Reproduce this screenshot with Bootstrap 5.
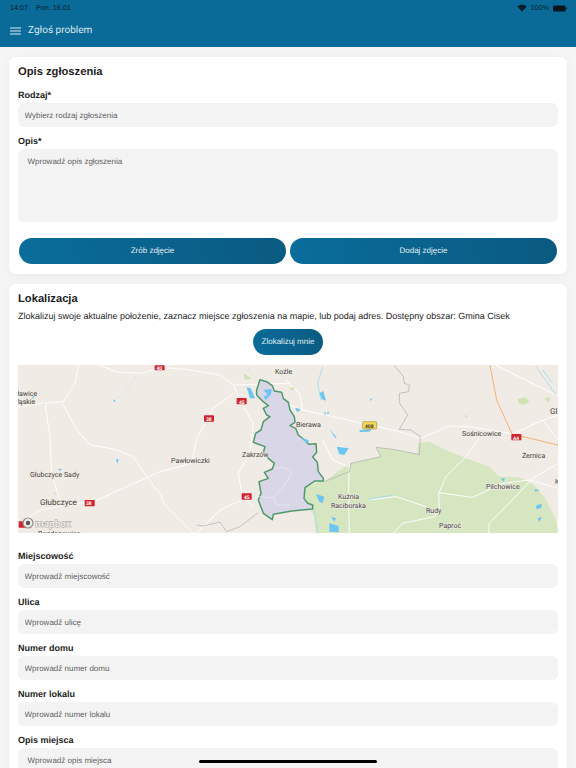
<!DOCTYPE html>
<html lang="pl">

<head>
    <meta charset="UTF-8">
    <meta name="viewport" content="width=device-width, initial-scale=1.0">
    <title>Zgłoś problem</title>
    <link href="https://cdn.jsdelivr.net/npm/bootstrap@5.3.2/dist/css/bootstrap.min.css" rel="stylesheet">
    <style>
        html, body { height: 768px; overflow: hidden; }
        body { background: #f5f5f5; font-family: "Liberation Sans", Arial, sans-serif; color: #1d1d1d; text-rendering: geometricPrecision; }
        .app-top { background: #0a6b98; height: 47px; margin-bottom: 10px; color: #dbe8ef; }
        .status-row { height: 14px; padding: 2px 9px 0 10px; font-size: 7.2px; line-height: 10px; color: #06202e; }
        .navbar.title-row { height: 33px; padding: 0 0 0 10px; gap: 7px; }
        .title-row span { font-family: Roboto, sans-serif; font-size: 10px; color: #dce9f0; }
        .sheet { background: #fff; border: 0; border-radius: 7px; margin: 0 9px 10px; padding: 8px 9px 0; box-shadow: 0 2px 10px rgba(0,0,0,.05); }
        .sheet-title { font-size: 11.2px; font-weight: 700; line-height: 14px; margin: 0; }
        .opis-title { margin-bottom: 10px; }
        .field-label { font-size: 9px; font-weight: 700; line-height: 12px; margin: 0 0 2px; display: block; }
        .field-input { background: #f3f3f3; border: 0; border-radius: 6px; height: 24px; padding: 0 6.5px; font-size: 8px; color: #444; text-rendering: geometricPrecision; }
        .field-input::placeholder { color: #5e5e5e; opacity: 1; }
        .field-area { height: 73px; padding: 7px 9.5px; resize: none; }
        .field-input:focus { background: #f3f3f3; box-shadow: none; }
        .addr { margin-bottom: 8px; }
        .pill-btn { background: linear-gradient(70deg, #0a6d9c, #0a5a80); color: #e4eef3; border: 0; border-radius: 13px; height: 26px; padding: 0; font-size: 8px; text-rendering: geometricPrecision; }
        .opis-card { padding-bottom: 10px; }
        .photo-row { gap: 4px; margin: 16px 1px 0; }
        .photo-row .btn { flex: 1 1 0; }
        .loc-text { font-size: 9px; line-height: 12px; margin: 4px 0 7px; }
        .loc-btn { width: 70px; }
        .loc-btn-row { margin-bottom: 10px; }
        .map-box { height: 168px; margin: 0 0 17px; }
        .map-box svg { display: block; }
        .map-box text { font-family: Roboto, "Liberation Sans", sans-serif; font-size: 7px; fill: #3f3f3a; paint-order: stroke; stroke: #f2ece5; stroke-width: 1.2px; }
        .map-box text.big-city { font-size: 8px; }
        .map-box text.mb-word { font-size: 10px; font-weight: 700; fill: #eee9e2; stroke: #8d8d8d; stroke-width: .7px; }
        .map-box text.shield-dark { fill: #333; stroke: none; font-size: 5px; font-weight: 700; }
        .map-box .shield text { fill: #fff; stroke: none; font-size: 5px; font-weight: 700; }
        .home-bar { position: fixed; left: 199px; top: 760px; width: 178px; height: 3px; border-radius: 2px; background: #000; }
    </style>
</head>

<body>
    <!-- Naglowek -->
    <div class="app-top">
        <div class="status-row d-flex align-items-center">
            <span class="me-2">14:07</span>
            <span>Pon. 16.01</span>
            <span class="ms-auto d-flex align-items-center gap-1">
                <svg width="10" height="8" viewBox="0 0 10 8"><path d="M5 7.6 0.2 2.6C2.8 0 7.2 0 9.8 2.6Z" fill="#06202e"/></svg>
                <span>100%</span>
                <svg width="14" height="7" viewBox="0 0 14 7"><rect x="0" y="0.5" width="12.5" height="6" rx="1.2" fill="#06141b"/><rect x="13" y="2.5" width="1" height="2" fill="#06202e"/></svg>
            </span>
        </div>
        <nav class="navbar title-row justify-content-start flex-nowrap">
            <svg width="11" height="8" viewBox="0 0 11 8"><path d="M0 1h11M0 4h11M0 7h11" stroke="#dce9f0" stroke-width="1.1"/></svg>
            <span>Zgłoś problem</span>
        </nav>
    </div>

    <!-- Opis zgloszenia -->
    <div class="card sheet opis-card">
        <h5 class="sheet-title opis-title">Opis zgłoszenia</h5>
        <label class="field-label">Rodzaj*</label>
        <input class="form-control field-input addr" type="text" placeholder="Wybierz rodzaj zgłoszenia">
        <label class="field-label">Opis*</label>
        <textarea class="form-control field-input field-area" placeholder="Wprowadź opis zgłoszenia"></textarea>
        <div class="d-flex photo-row">
            <button class="btn pill-btn">Zrób zdjęcie</button>
            <button class="btn pill-btn">Dodaj zdjęcie</button>
        </div>
    </div>

    <!-- Lokalizacja -->
    <div class="card sheet">
        <h5 class="sheet-title">Lokalizacja</h5>
        <p class="loc-text">Zlokalizuj swoje aktualne położenie, zaznacz miejsce zgłoszenia na mapie, lub podaj adres. Dostępny obszar: Gmina Cisek</p>
        <div class="text-center loc-btn-row"><button class="btn pill-btn loc-btn">Zlokalizuj mnie</button></div>
        <div class="map-box">
            <svg width="540" height="168" viewBox="18 365 540 168">
                <rect x="18" y="365" width="540" height="168" fill="#f0ebe4"/>
                <!-- prawa czesc mapy, wspolrzedne z powiekszenia 3x -->
                <g transform="translate(286 360) scale(.33333)">
                    <path d="M115 365 190 310 285 290 270 262 320 268 395 282 395 250 430 245 480 270 540 295 610 320 640 350 700 352 745 375 780 420 810 480 816 522H90L85 470 60 430 55 385 110 360Z" fill="#d5e6c1"/>
                    <g fill="none" stroke="#fff" stroke-width="2.8">
                        <path d="M0 130 50 150 140 170 230 190 340 215 405 235 490 198 550 200 680 222 760 185 816 165"/>
                        <path d="M630 16 820 110M770 180 816 240"/>
                        <path d="M580 235 540 290 480 350 458 400 460 450 445 470 350 490 320 522"/>
                        <path d="M458 398 560 412 650 370 730 360 816 385"/>
                        <path d="M816 310 740 355 660 440 610 490 608 522"/>
                        <path d="M190 310 188 400 190 522"/>
                        <path d="M250 420 330 410 420 440"/>
                        <path d="M0 60 40 100 50 150M110 240 140 300 188 320"/>
                    </g>
                    <g fill="none" stroke="#9fdcf3" stroke-width="2.5">
                        <path d="M110 20 95 70 105 120"/>
                        <path d="M750 20 810 105M770 30 800 70"/>
                        <path d="M250 418 320 405"/>
                        <path d="M85 450 95 520"/>
                    </g>
                    <g fill="#6cc6ef">
                        <path d="M100 100 112 93 120 122 108 118Z"/>
                        <path d="M152 260 188 265 175 285 160 282Z"/>
                        <path d="M30 145 44 148 36 156Z"/>
                        <path d="M130 208 152 232 148 234Z"/>
                        <path d="M220 210 258 208 250 215 222 216Z"/>
                        <path d="M90 402 115 410 110 430 100 425Z"/>
                        <path d="M130 490 158 498 158 516 130 515Z"/>
                        <path d="M135 470 150 475 145 485Z"/>
                        <path d="M645 355 657 355 652 366Z"/>
                        <path d="M745 388 762 390 748 395Z"/>
                        <path d="M752 435 768 432 765 445 750 447Z"/>
                        <path d="M755 475 768 472 760 485Z"/>
                        <path d="M252 118 260 114 254 123Z"/>
                        <path d="M115 158 120 156 117 168ZM124 155 130 156 125 166Z"/>
                    </g>
                    <g fill="#cfe3b4">
                        <path d="M695 118 718 112 730 125 715 135 698 130Z"/>
                        <path d="M775 115 792 112 788 128Z"/>
                        <path d="M8 85 28 82 20 92Z"/>
                        <path d="M535 165 545 168 541 173Z"/>
                    </g>
                    <!-- granice administracyjne -->
                    <path d="M325 16 352 50 355 70 370 75 368 95 340 100 340 128 365 165 340 208 375 210 403 230 400 285 393 282 320 268 270 262 285 290 195 310 190 335 115 365" fill="none" stroke="#acacac" stroke-width="2"/>
                    <path d="M612 16 632 120 678 222 816 255" fill="none" stroke="#f7b26f" stroke-width="3"/>
                    <rect x="676" y="222" width="30" height="19" rx="2" fill="#d3222d"/>
                    <rect x="230" y="185" width="42" height="22" rx="3" fill="#f3d957" stroke="#8a7420" stroke-width="1.5"/>
                </g>
                <!-- lewa czesc mapy -->
                <g transform="translate(0 360) scale(.33333)">
                    <g fill="none" stroke="#fff" stroke-width="2.8">
                        <path d="M300 16 350 36 430 40 480 22 560 28 660 45 700 75 870 70"/>
                        <path d="M700 75 730 140 760 190 750 280 715 340 725 400 760 440"/>
                        <path d="M236 16 225 70 190 125 130 130 54 140"/>
                        <path d="M185 125 230 210 270 255 345 268 400 290 440 350 485 410 490 430 580 520"/>
                        <path d="M700 100 640 145 590 235 575 310 480 335 280 425 200 436 120 450 55 495"/>
                        <path d="M135 130 150 230 155 340 180 420"/>
                        <path d="M725 420 660 450 590 520"/>
                    </g>
                    <path d="M590 495 610 498 660 486 680 515 720 500 775 458" fill="none" stroke="#acacac" stroke-width="2"/>
                    <path d="M750 18 745 35 770 55M410 45 380 90 345 120" fill="none" stroke="#cde8f2" stroke-width="2"/>
                    <path d="M95 105 105 110 98 116ZM340 118 347 122 341 126ZM175 326 187 328 178 333ZM348 298 356 298 352 312Z M740 82 752 84 765 115 750 115Z" fill="#6cc6ef"/>
                    <path d="M128 130 134 132 129 136ZM160 398 170 398 165 404ZM730 40 755 55 735 60Z" fill="#cfe3b4"/>
                    <g fill="#d3222d">
                        <rect x="464" y="16" width="30" height="15" rx="2"/>
                        <rect x="710" y="114" width="30" height="19" rx="2"/>
                        <rect x="612" y="166" width="30" height="19" rx="2"/>
                        <rect x="725" y="400" width="30" height="19" rx="2"/>
                        <rect x="254" y="420" width="30" height="19" rx="2"/>
                        <rect x="56" y="484" width="22" height="19" rx="2"/>
                    </g>
                </g>
                <!-- obszar gminy -->
                <g transform="translate(235 365) scale(.33333)">
                    <path d="M75 44 95 50 112 62 118 78 140 82 145 100 160 112 165 135 178 155 180 172 165 182 182 190 190 210 205 222 222 238 243 236 245 262 233 276 247 292 250 320 265 340 265 348 240 348 210 368 207 400 218 415 233 420 233 432 170 438 115 448 112 464 85 445 70 405 78 385 72 350 100 340 88 322 112 312 118 295 100 280 85 262 90 245 55 232 62 205 78 195 85 170 105 155 95 150 85 130 100 122 85 110 65 90 65 75Z" fill="#d9d6e8" stroke="#4f9a6a" stroke-width="4.5" stroke-linejoin="round"/>
                    <path d="M85 75 110 72 108 88 92 105 86 95 98 88ZM180 130 196 132 186 140ZM200 218 222 226 216 236Z" fill="#6cc6ef"/>
                    <path d="M72 395 115 398 125 420 165 420M115 398 160 345 170 318 145 308 120 310" fill="none" stroke="#f2eff3" stroke-width="2"/>
                </g>
                <!-- etykiety -->
                <text x="13" y="396">Sławice</text>
                <text x="13" y="403.500">Śląskie</text>
                <text x="275" y="374">Koźle</text>
                <text x="296" y="427">Bierawa</text>
                <text x="242" y="457">Zakrzów</text>
                <text x="171" y="463">Pawłowiczki</text>
                <text x="30" y="477">Głubczyce Sady</text>
                <text x="40" y="505" class="big-city">Głubczyce</text>
                <text x="38" y="536">Bogdanowice</text>
                <text x="462" y="436">Sośnicowice</text>
                <text x="522" y="458">Żernica</text>
                <text x="486" y="489">Pilchowice</text>
                <text x="338" y="499">Kuźnia</text>
                <text x="331" y="508">Raciborska</text>
                <text x="426" y="513">Rudy</text>
                <text x="439" y="528">Paproć</text>
                <text x="550" y="414" class="big-city">Gl</text>
                <text x="555" y="484">K</text>
                <g class="shield">
                    <text x="156.500" y="370">40</text>
                    <text x="239" y="403.500">45</text>
                    <text x="206" y="421">38</text>
                    <text x="244" y="498.500">45</text>
                    <text x="86" y="505">38</text>
                    <text x="513" y="439.500">A4</text>
                </g>
                <text x="365" y="427.500" class="shield-dark">408</text>
                <!-- logo mapbox -->
                <circle cx="28" cy="523" r="5" fill="#f0ebe4" stroke="#8d8d8d" stroke-width="1.2"/>
                <circle cx="28" cy="523" r="2.2" fill="#555"/>
                <text x="35" y="527" class="mb-word">mapbox</text>
            </svg>
        </div>
        <label class="field-label">Miejscowość</label>
        <input class="form-control field-input addr" type="text" placeholder="Wprowadź miejscowość">
        <label class="field-label">Ulica</label>
        <input class="form-control field-input addr" type="text" placeholder="Wprowadź ulicę">
        <label class="field-label">Numer domu</label>
        <input class="form-control field-input addr" type="text" placeholder="Wprowadź numer domu">
        <label class="field-label">Numer lokalu</label>
        <input class="form-control field-input addr" type="text" placeholder="Wprowadź numer lokalu">
        <label class="field-label">Opis miejsca</label>
        <textarea class="form-control field-input field-area" placeholder="Wprowadź opis miejsca"></textarea>
    </div>
    <div class="home-bar"></div>
</body>

</html>
